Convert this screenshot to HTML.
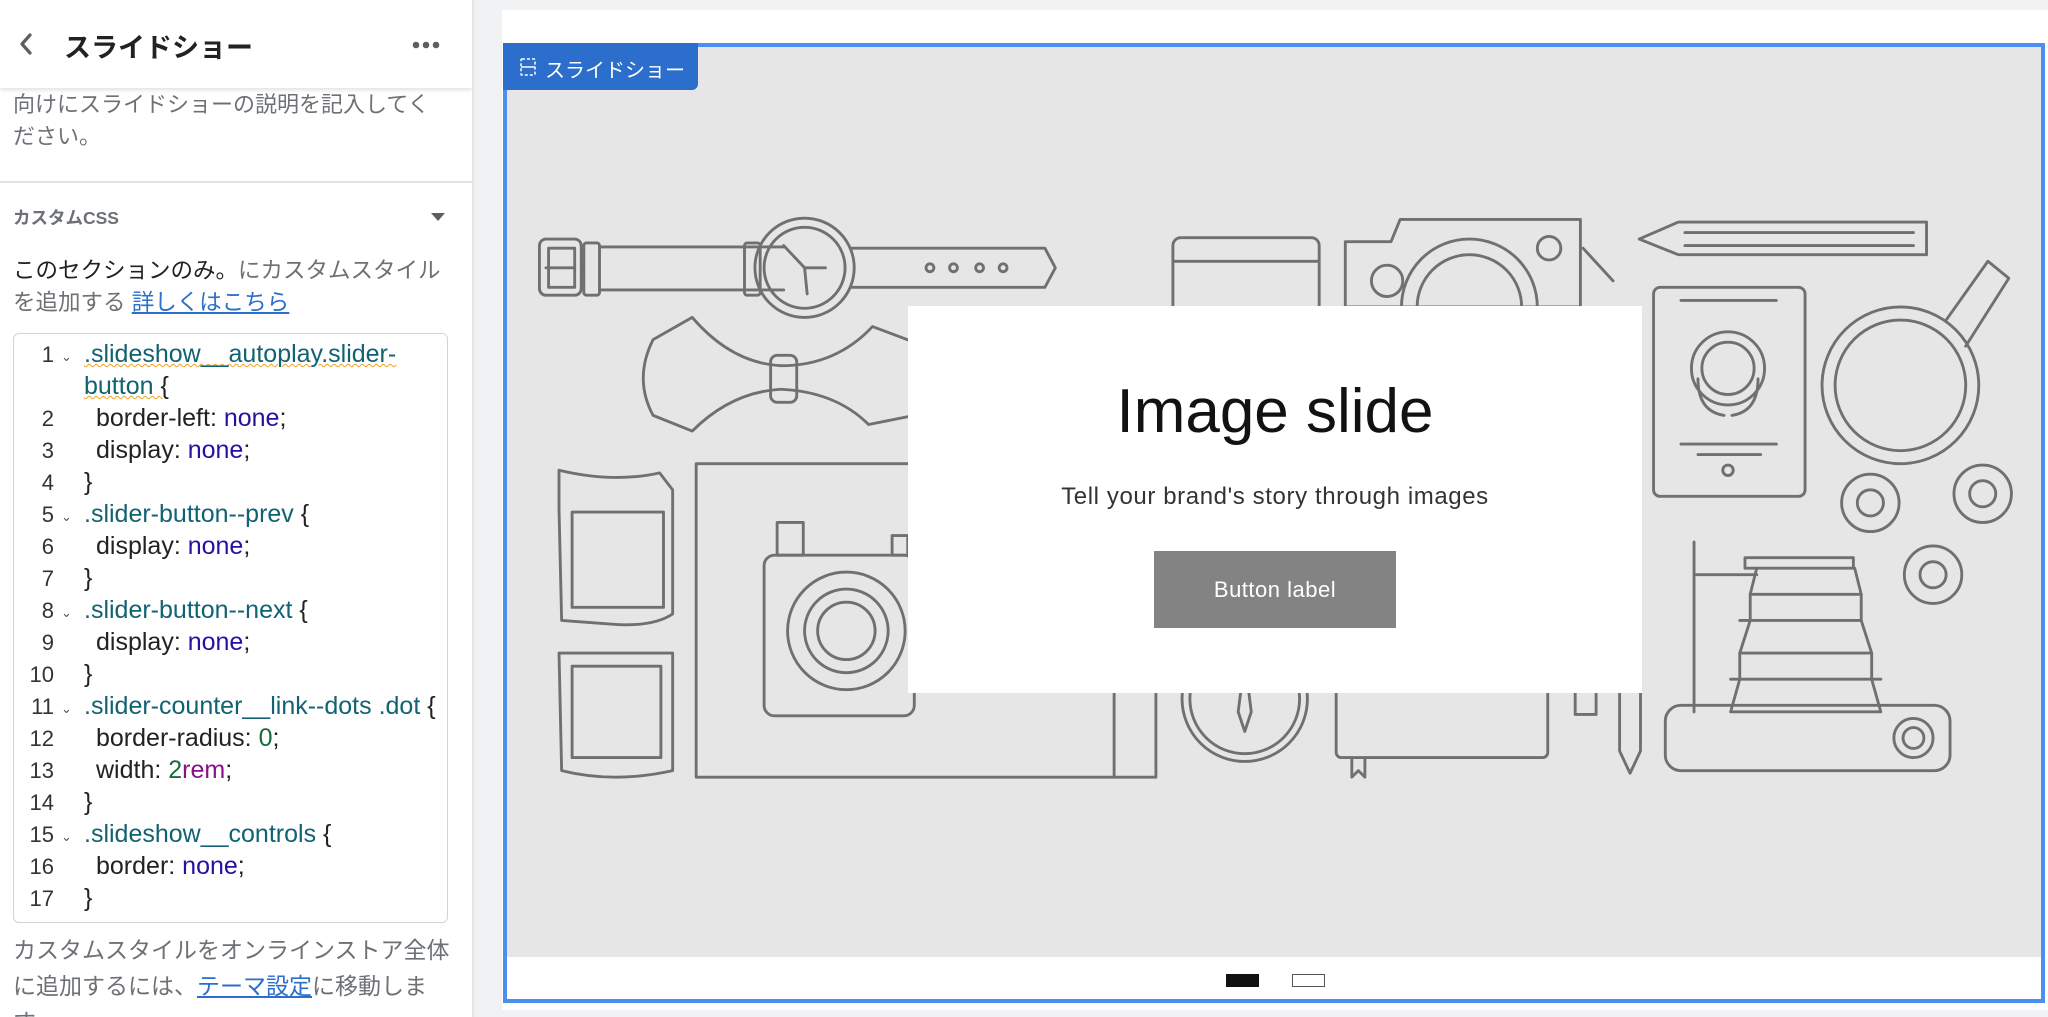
<!DOCTYPE html>
<html><head><meta charset="utf-8"><style>
*{margin:0;padding:0;box-sizing:border-box}
body{width:2048px;height:1017px;overflow:hidden;background:#f1f2f4;font-family:"Liberation Sans","Noto Sans CJK JP",sans-serif;position:relative}
.side{position:absolute;left:0;top:0;width:474px;height:1017px;background:#fff;border-right:2px solid #e4e5e7;overflow:hidden}
.hdr{position:absolute;left:0;top:0;width:472px;height:88px;background:#fff;box-shadow:0 2px 4px rgba(0,0,0,.12);z-index:2}
.hdr .t{position:absolute;left:64px;top:26px;font-size:27px;font-weight:bold;color:#202223}
.a{position:absolute;color:#6d7175;font-size:22px;line-height:32px;left:13px;white-space:nowrap}
.code{position:absolute;left:13px;top:333px;width:435px;height:590px;border:1px solid #d2d5d8;border-radius:6px;font-size:25px;color:#202223}
.ln{position:absolute;width:40px;text-align:right;left:0;color:#333;font-size:22px}
.cl{position:absolute;left:70px;white-space:nowrap}
.sel{color:#116272}.kw{color:#2a0ea0}.num{color:#1a6b3c}.unit{color:#8a0f8a}
.chev{position:absolute;left:47px;font-size:13px;color:#555}
.preview{position:absolute;left:502px;top:10px;width:1546px;height:1000px;background:#fff}
.slide{position:absolute;left:503px;top:43px;width:1542px;height:960px;background:#e6e6e6}
.bar{position:absolute;left:507px;top:957px;width:1534px;height:46px;background:#fff}
</style></head><body>
<div class="side">
<div class="hdr">
<svg style="position:absolute;left:18px;top:32px" width="16" height="24" viewBox="0 0 16 24"><path d="M12 3 L4 12 L12 21" stroke="#5c5f62" stroke-width="3.2" fill="none" stroke-linecap="round" stroke-linejoin="round"/></svg>
<div class="t">スライドショー</div>
<svg style="position:absolute;left:412px;top:40px" width="28" height="10"><circle cx="4" cy="5" r="3.3" fill="#5c5f62"/><circle cx="14" cy="5" r="3.3" fill="#5c5f62"/><circle cx="24" cy="5" r="3.3" fill="#5c5f62"/></svg>
</div>
<div class="a" style="top:89px">向けにスライドショーの説明を記入してく</div>
<div class="a" style="top:121px">ださい。</div>
<div style="position:absolute;left:0;top:181px;width:474px;height:2px;background:#e1e3e5"></div>
<div class="a" style="top:202px;font-size:17.5px;font-weight:bold;color:#6d7175">カスタムCSS</div>
<svg style="position:absolute;left:431px;top:213px" width="14" height="9"><path d="M0 0 H14 L7 8Z" fill="#5c5f62"/></svg>
<div class="a" style="top:255px;font-size:22.5px;color:#6d7175"><span style="color:#202223">このセクションのみ。</span>にカスタムスタイル</div>
<div class="a" style="top:287px;font-size:22.5px">を追加する <span style="color:#2c6ecb;text-decoration:underline">詳しくはこちら</span></div>
<div class="code">
<div class="ln" style="top:8px">1</div><div class="chev" style="top:15px">⌄</div><div class="cl sel" style="top:6px;text-decoration:underline wavy #f0a020;text-decoration-thickness:1px">.slideshow__autoplay.slider-</div>
<div class="cl sel" style="top:38px;text-decoration:underline wavy #f0a020;text-decoration-thickness:1px">button <span style="color:#202223">{</span></div>
<div class="ln" style="top:72px">2</div><div class="cl" style="top:70px;left:82px">border-left: <span class="kw">none</span>;</div>
<div class="ln" style="top:104px">3</div><div class="cl" style="top:102px;left:82px">display: <span class="kw">none</span>;</div>
<div class="ln" style="top:136px">4</div><div class="cl" style="top:134px">}</div>
<div class="ln" style="top:168px">5</div><div class="chev" style="top:175px">⌄</div><div class="cl sel" style="top:166px">.slider-button--prev <span style="color:#202223">{</span></div>
<div class="ln" style="top:200px">6</div><div class="cl" style="top:198px;left:82px">display: <span class="kw">none</span>;</div>
<div class="ln" style="top:232px">7</div><div class="cl" style="top:230px">}</div>
<div class="ln" style="top:264px">8</div><div class="chev" style="top:271px">⌄</div><div class="cl sel" style="top:262px">.slider-button--next <span style="color:#202223">{</span></div>
<div class="ln" style="top:296px">9</div><div class="cl" style="top:294px;left:82px">display: <span class="kw">none</span>;</div>
<div class="ln" style="top:328px">10</div><div class="cl" style="top:326px">}</div>
<div class="ln" style="top:360px">11</div><div class="chev" style="top:367px">⌄</div><div class="cl sel" style="top:358px">.slider-counter__link--dots .dot <span style="color:#202223">{</span></div>
<div class="ln" style="top:392px">12</div><div class="cl" style="top:390px;left:82px">border-radius: <span class="num">0</span>;</div>
<div class="ln" style="top:424px">13</div><div class="cl" style="top:422px;left:82px">width: <span class="num">2</span><span class="unit">rem</span>;</div>
<div class="ln" style="top:456px">14</div><div class="cl" style="top:454px">}</div>
<div class="ln" style="top:488px">15</div><div class="chev" style="top:495px">⌄</div><div class="cl sel" style="top:486px">.slideshow__controls <span style="color:#202223">{</span></div>
<div class="ln" style="top:520px">16</div><div class="cl" style="top:518px;left:82px">border: <span class="kw">none</span>;</div>
<div class="ln" style="top:552px">17</div><div class="cl" style="top:550px">}</div>
</div>
<div class="a" style="top:934px;font-size:23px">カスタムスタイルをオンラインストア全体</div>
<div class="a" style="top:970px;font-size:23px">に追加するには、<span style="color:#2c6ecb;text-decoration:underline">テーマ設定</span>に移動しま</div>
<div class="a" style="top:1006px;font-size:23px">す</div>
</div>
<div class="preview"></div>
<div class="slide"></div>
<svg style="position:absolute;left:0;top:0" width="2048" height="1017" viewBox="0 0 1568 778.6" fill="none" stroke="#707070" stroke-width="2.2" stroke-linecap="round" stroke-linejoin="round">
<rect x="413" y="183" width="32" height="43" rx="5"/><rect x="420" y="190" width="20" height="30"/><path d="M418 205 H440"/>
<rect x="447" y="186" width="12" height="40" rx="2"/><path d="M459 189 H580 M459 222 H580"/><rect x="570" y="186" width="12" height="40" rx="2"/>
<path d="M582 189 H600 M582 222 H600"/>
<circle cx="616" cy="205" r="38"/><circle cx="616" cy="205" r="31"/><path d="M616 205 L600 188 M616 205 H632 M616 205 L618 225"/>
<path d="M652 190 H800 L808 205 L800 220 H652"/><circle cx="712" cy="205" r="3"/><circle cx="730" cy="205" r="3"/><circle cx="750" cy="205" r="3"/><circle cx="768" cy="205" r="3"/>
<path d="M530 243 L500 260 Q485 290 500 318 L530 330 Q560 300 598 298 Q640 300 665 325 L700 318 Q712 290 700 262 L668 250 Q640 280 598 280 Q560 278 530 243Z"/><rect x="590" y="272" width="20" height="36" rx="5"/>
<path d="M428 360 Q470 370 505 362 L515 375 L515 470 Q500 480 470 478 L430 475 L428 390Z"/><path d="M438 392 L508 392 L508 465 L438 465Z"/>
<path d="M428 500 L515 500 L515 590 Q470 600 430 590Z"/><path d="M438 510 L506 510 L506 580 L438 580Z"/>
<rect x="533" y="355" width="320" height="240"/><path d="M853 380 L885 380 L885 595 L853 595"/>
<rect x="585" y="425" width="115" height="123" rx="8"/><circle cx="648" cy="483" r="45"/><circle cx="648" cy="483" r="32"/><circle cx="648" cy="483" r="22"/><rect x="595" y="400" width="20" height="25"/><rect x="683" y="410" width="12" height="15"/>
<circle cx="953" cy="535" r="48"/><circle cx="953" cy="535" r="42"/><path d="M953 505 L948 545 L953 560 L958 545Z"/>
<rect x="898" y="182" width="112" height="60" rx="6"/><path d="M898 200 H1010"/>
<path d="M1030 185 H1065 L1072 168 H1210 V235 H1030Z"/><circle cx="1125" cy="235" r="52"/><circle cx="1125" cy="235" r="40"/><circle cx="1186" cy="190" r="9"/><circle cx="1062" cy="215" r="12"/><path d="M1212 190 L1235 215"/>
<path d="M1255 183 L1285 170 H1475 V195 H1285Z"/><path d="M1290 178 H1465 M1290 188 H1465"/>
<rect x="1266" y="220" width="116" height="160" rx="5"/><circle cx="1323" cy="282" r="28"/><circle cx="1323" cy="282" r="20"/><path d="M1287 230 H1360 M1287 340 H1360 M1300 348 H1348"/><circle cx="1323" cy="360" r="4"/><path d="M1300 290 Q1300 315 1320 318 M1346 290 Q1346 315 1326 318"/>
<circle cx="1455" cy="295" r="60"/><circle cx="1455" cy="295" r="50"/><path d="M1490 245 L1522 200 L1538 213 L1505 265"/>
<circle cx="1432" cy="385" r="22"/><circle cx="1432" cy="385" r="10"/><circle cx="1518" cy="378" r="22"/><circle cx="1518" cy="378" r="10"/><circle cx="1480" cy="440" r="22"/><circle cx="1480" cy="440" r="10"/>
<path d="M1297 415 V545 M1297 440 H1345"/><rect x="1336" y="427" width="83" height="8"/><path d="M1345 435 L1340 455 V475 L1332 500 V520 L1325 545 H1440 L1433 520 V500 L1425 475 V455 L1420 435"/><path d="M1340 455 H1425 M1332 475 H1425 M1332 500 H1433 M1325 520 H1440"/>
<rect x="1275" y="540" width="218" height="50" rx="12"/><circle cx="1465" cy="565" r="15"/><circle cx="1465" cy="565" r="8"/>
<rect x="1023" y="525" width="162" height="55" rx="4"/><path d="M1035 580 V595 L1040 590 L1045 595 V580"/>
<rect x="1206" y="525" width="16" height="22"/><path d="M1240 530 V575 L1248 592 L1256 575 V530"/>
</svg>
<div class="bar"></div>
<div style="position:absolute;left:1226px;top:974px;width:33px;height:13px;background:#111"></div>
<div style="position:absolute;left:1292px;top:974px;width:33px;height:13px;border:1.5px solid #555;background:#fff"></div>
<div style="position:absolute;left:503px;top:43px;width:1542px;height:960px;border:4px solid #4a90f0;pointer-events:none"></div>
<div style="position:absolute;left:503px;top:43px;width:195px;height:47px;background:#2c6ecb;border-radius:0 0 6px 0"></div>
<svg style="position:absolute;left:520px;top:58px" width="16" height="18" viewBox="0 0 16 18" fill="none" stroke="#fff" stroke-width="1.5" stroke-dasharray="3 2"><rect x="1" y="1" width="14" height="16" rx="1"/><path d="M1 9 H15" stroke-dasharray="none"/></svg>
<div style="position:absolute;left:545px;top:54px;font-size:20px;color:#fff">スライドショー</div>
<div style="position:absolute;left:908px;top:306px;width:734px;height:387px;background:#fff;text-align:center">
<div style="position:absolute;left:0;right:0;top:70px;font-size:62px;color:#121212;font-weight:normal">Image slide</div>
<div style="position:absolute;left:0;right:0;top:177px;font-size:24px;color:#333;letter-spacing:.6px">Tell your brand's story through images</div>
<div style="position:absolute;left:246px;top:245px;width:242px;height:77px;background:#838383;color:#fff;font-size:22px;line-height:77px;letter-spacing:.5px">Button label</div>
</div>
</body></html>
